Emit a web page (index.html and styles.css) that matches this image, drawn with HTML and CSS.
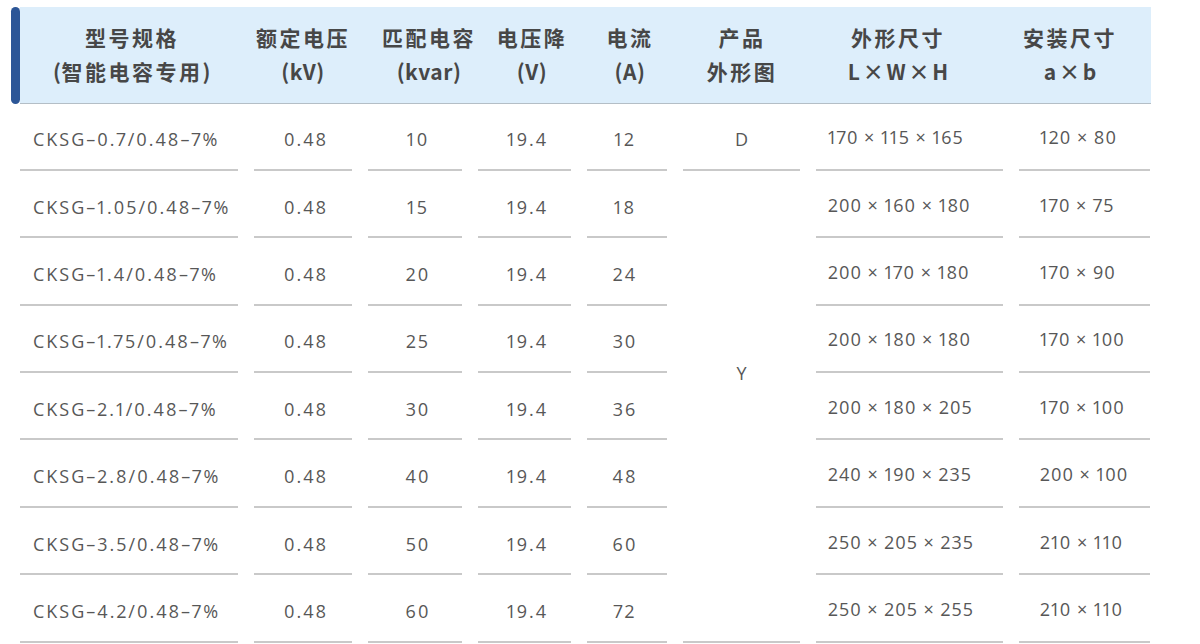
FILE: index.html
```html
<!DOCTYPE html>
<html lang="zh-CN">
<head>
<meta charset="utf-8">
<title>CKSG 参数表</title>
<link rel="stylesheet" href="styles.css">
</head>
<body>
<div class="table">
  <div class="head-row">
    <div class="accent"></div>
    <div class="head">
      <div class="hc"><span>型号规格</span><span><span class="lat">(</span>智能电容专用<span class="lat">)</span></span></div>
      <div class="hc"><span>额定电压</span><span class="lat">(kV)</span></div>
      <div class="hc"><span>匹配电容</span><span class="lat">(kvar)</span></div>
      <div class="hc"><span>电压降</span><span class="lat">(V)</span></div>
      <div class="hc"><span>电流</span><span class="lat">(A)</span></div>
      <div class="hc"><span>产品</span><span>外形图</span></div>
      <div class="hc"><span>外形尺寸</span><span class="lat dim">L × W × H</span></div>
      <div class="hc"><span>安装尺寸</span><span class="lat dim">a × b</span></div>
    </div>
  </div>
  <div class="body">
    <div class="c c1">CKSG–0.7/0.48–7%</div><div class="c c2">0.48</div><div class="c c3">10</div><div class="c c4">19.4</div><div class="c c5">12</div><div class="c c6">D</div><div class="c c7">170 × 115 × 165</div><div class="c c8">120 × 80</div>
    <div class="c c1">CKSG–1.05/0.48–7%</div><div class="c c2">0.48</div><div class="c c3">15</div><div class="c c4">19.4</div><div class="c c5">18</div><div class="c c6 span">Y</div><div class="c c7">200 × 160 × 180</div><div class="c c8">170 × 75</div>
    <div class="c c1">CKSG–1.4/0.48–7%</div><div class="c c2">0.48</div><div class="c c3">20</div><div class="c c4">19.4</div><div class="c c5">24</div><div class="c c7">200 × 170 × 180</div><div class="c c8">170 × 90</div>
    <div class="c c1">CKSG–1.75/0.48–7%</div><div class="c c2">0.48</div><div class="c c3">25</div><div class="c c4">19.4</div><div class="c c5">30</div><div class="c c7">200 × 180 × 180</div><div class="c c8">170 × 100</div>
    <div class="c c1">CKSG–2.1/0.48–7%</div><div class="c c2">0.48</div><div class="c c3">30</div><div class="c c4">19.4</div><div class="c c5">36</div><div class="c c7">200 × 180 × 205</div><div class="c c8">170 × 100</div>
    <div class="c c1">CKSG–2.8/0.48–7%</div><div class="c c2">0.48</div><div class="c c3">40</div><div class="c c4">19.4</div><div class="c c5">48</div><div class="c c7">240 × 190 × 235</div><div class="c c8">200 × 100</div>
    <div class="c c1">CKSG–3.5/0.48–7%</div><div class="c c2">0.48</div><div class="c c3">50</div><div class="c c4">19.4</div><div class="c c5">60</div><div class="c c7">250 × 205 × 235</div><div class="c c8">210 × 110</div>
    <div class="c c1">CKSG–4.2/0.48–7%</div><div class="c c2">0.48</div><div class="c c3">60</div><div class="c c4">19.4</div><div class="c c5">72</div><div class="c c7">250 × 205 × 255</div><div class="c c8">210 × 110</div>
  </div>
</div>
</body>
</html>
```

FILE: styles.css
```css
html, body {
  margin: 0;
  padding: 0;
  background: #ffffff;
  overflow: hidden;
}

.table {
  margin: 7px 0 0 11px;
  width: 1140px;
}

.head-row {
  display: flex;
  height: 96.5px;
}

.accent {
  width: 9px;
  background: #2c5697;
  border-radius: 5px;
  flex: none;
}

.head {
  width: 1131px;
  background: #ddeefb;
  border-bottom: 1.5px solid #b4bec6;
  display: grid;
  grid-template-columns: 224px 118px 134px 72px 124px 100px 212px 132px;
  align-items: center;
}

.hc {
  display: flex;
  flex-direction: column;
  align-items: center;
  padding-bottom: 2px;
  font-family: "Noto Sans CJK SC", "Noto Sans", sans-serif;
  font-weight: 700;
  font-size: 21px;
  line-height: 34px;
  letter-spacing: 2.5px;
  color: #474747;
  white-space: nowrap;
}

.hc .lat {
  letter-spacing: 0.5px;
}

.hc .dim {
  letter-spacing: 0;
  word-spacing: -2px;
}

.body {
  margin-left: 9px;
  display: grid;
  grid-template-columns: 218px 98px 94px 93px 80px 117px 187px 131px;
  grid-auto-rows: 67.4px;
  column-gap: 16px;
}

.c {
  display: flex;
  align-items: center;
  justify-content: center;
  box-sizing: border-box;
  border-bottom: 2px solid #c9c9c9;
  padding-top: 6px;
  font-family: "Open Sans", "Noto Sans", sans-serif;
  font-size: 18px;
  letter-spacing: 2px;
  font-variant-numeric: proportional-nums;
  color: #575757;
  white-space: nowrap;
}

.c1 { justify-content: flex-start; padding-left: 13px; }
.c2, .c3, .c4 { padding-left: 6px; }
.c5 { padding-right: 4px; }
.c6 { padding-left: 2px; }
.c7 { justify-content: flex-start; padding-left: 12px; padding-top: 2px; letter-spacing: 1px; }
.c8 { justify-content: flex-start; padding-left: 21px; padding-top: 2px; letter-spacing: 1px; }

.span {
  grid-row: span 7;
  align-items: flex-start;
  padding-top: 190px;
}
```
